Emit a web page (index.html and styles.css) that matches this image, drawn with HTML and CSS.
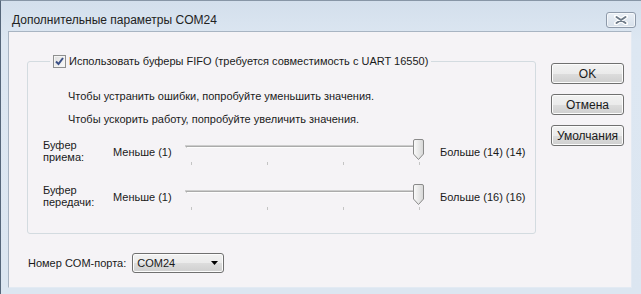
FILE: index.html
```html
<!DOCTYPE html>
<html lang="ru">
<head>
<meta charset="utf-8">
<title>Дополнительные параметры COM24</title>
<link rel="stylesheet" href="styles.css">
</head>
<body>
<div class="window">
  <div class="titlebar">
    <span class="title">Дополнительные параметры COM24</span>
    <span class="close">
      <svg width="14" height="10" viewBox="0 0 14 10">
        <path d="M2 1.5 L12 8.5 M12 1.5 L2 8.5" stroke="#fff" stroke-width="4" stroke-linecap="round"/>
        <path d="M2.5 2 L11.5 8 M11.5 2 L2.5 8" stroke="#6d7a88" stroke-width="2" stroke-linecap="round"/>
      </svg>
    </span>
  </div>
  <div class="client">
    <div class="main">
      <div class="group">
        <div class="legend">
          <span class="checkbox">
            <svg width="11" height="11" viewBox="0 0 11 11">
              <path d="M2 5.5 L4.5 8 L9 2" fill="none" stroke="#3a4f86" stroke-width="2"/>
            </svg>
          </span>
          <span>Использовать буферы FIFO (требуется совместимость с UART 16550)</span>
        </div>
        <p class="hint first">Чтобы устранить ошибки, попробуйте уменьшить значения.</p>
        <p class="hint">Чтобы ускорить работу, попробуйте увеличить значения.</p>
        <div class="rows">
          <div class="lbl"><div>Буфер</div><div>приема:</div></div>
          <div class="minmax">Меньше (1)</div>
          <div class="slider">
            <div class="track"></div>
            <svg class="thumb" width="11" height="21" viewBox="0 0 11 21">
              <defs><linearGradient id="tg" x1="0" y1="0" x2="1" y2="0"><stop offset="0" stop-color="#fbfbfb"/><stop offset="1" stop-color="#d6d6d6"/></linearGradient></defs>
              <path d="M2 0.5 H9 Q10.5 0.5 10.5 2 V15 L5.5 20.5 L0.5 15 V2 Q0.5 0.5 2 0.5 Z" fill="url(#tg)" stroke="#8a8a8a"/>
            </svg>
            <div class="ticks"><i></i><i></i><i></i><i></i></div>
          </div>
          <div class="minmax">Больше (14) (14)</div>

          <div class="lbl"><div>Буфер</div><div>передачи:</div></div>
          <div class="minmax">Меньше (1)</div>
          <div class="slider">
            <div class="track"></div>
            <svg class="thumb" width="11" height="21" viewBox="0 0 11 21">
              <path d="M2 0.5 H9 Q10.5 0.5 10.5 2 V15 L5.5 20.5 L0.5 15 V2 Q0.5 0.5 2 0.5 Z" fill="url(#tg)" stroke="#8a8a8a"/>
            </svg>
            <div class="ticks"><i></i><i></i><i></i><i></i></div>
          </div>
          <div class="minmax">Больше (16) (16)</div>
        </div>
      </div>
      <div class="buttons">
        <button class="btn">OK</button>
        <button class="btn">Отмена</button>
        <button class="btn">Умолчания</button>
      </div>
    </div>
    <div class="port">
      <span>Номер COM-порта:</span>
      <span class="combo">
        <span>COM24</span>
        <svg width="7" height="4" viewBox="0 0 7 4"><path d="M0 0 H7 L3.5 4 Z" fill="#000"/></svg>
      </span>
    </div>
  </div>
</div>
</body>
</html>
```
FILE: styles.css
```css
* { box-sizing: border-box; }
html, body { margin: 0; padding: 0; }
body {
  width: 641px;
  height: 294px;
  overflow: hidden;
  font-family: "Liberation Sans", Arial, sans-serif;
  font-size: 11px;
  color: #1a1a1a;
}
.window {
  width: 641px;
  height: 294px;
  display: flex;
  flex-direction: column;
  background: linear-gradient(#d3dfec, #dde7f2 40px, #dce6f1);
  border-left: 1px solid #55667a;
  border-top: 1px solid #8796a6;
  padding: 0 9px 6px 7px;
}
.titlebar {
  height: 30px;
  flex: none;
  display: flex;
  justify-content: space-between;
  align-items: flex-start;
}
.title {
  margin: 11px 0 0 4px;
  font-size: 12px;
  color: #222;
  line-height: 16px;
}
.close {
  margin: 11px -4px 0 0;
  width: 30px;
  height: 16px;
  border: 1px solid #8e9aaa;
  border-radius: 3px;
  background: linear-gradient(#e9eff6, #d7e0ea);
  display: flex;
  align-items: center;
  justify-content: center;
  box-shadow: inset 0 0 0 1px rgba(255,255,255,0.6);
}
.client {
  flex: 1;
  background: #f5f3f6;
  border: 1px solid #a8b4c2;
  border-right-color: #e3eaf3;
  border-bottom-color: #e3eaf3;
  padding: 29px 7px 0 18px;
  display: flex;
  flex-direction: column;
}
.main {
  display: flex;
  gap: 15px;
}
.group {
  width: 510px;
  height: 173px;
  border: 1px solid #d3dbe0;
  border-radius: 3px;
}
.legend {
  display: flex;
  align-items: center;
  gap: 3px;
  height: 14px;
  margin: -8px 0 0 22px;
  padding: 0 3px;
  width: max-content;
  background: #f5f3f6;
  line-height: 14px;
}
.checkbox {
  width: 13px;
  height: 13px;
  border: 1px solid #8e8f8f;
  background: linear-gradient(135deg, #dedede, #fbfbfb);
  box-shadow: inset 0 0 0 1px #f4f4f4;
  display: flex;
  align-items: center;
  justify-content: center;
}
.hint {
  margin: 9px 0 0 40px;
  line-height: 14px;
}
.hint.first { margin-top: 21px; }
.rows {
  display: grid;
  grid-template-columns: 70px 73px 254px auto;
  row-gap: 17px;
  margin: 13px 0 0 15px;
}
.lbl { line-height: 12px; }
.lbl div { height: 12px; }
.minmax { line-height: 14px; margin-top: 6px; }
.slider {
  position: relative;
  width: 239px;
  height: 28px;
  padding-top: 7px;
}
.track {
  height: 2px;
  width: 234px;
  border-top: 1px solid #ababab;
  border-bottom: 1px solid #fdfdfd;
  border-left: 1px solid #ababab;
  box-shadow: -1px -1px 0 0 #cdcdcd;
}
.thumb {
  position: absolute;
  right: 1px;
  top: 0;
}
.ticks {
  display: flex;
  justify-content: space-between;
  padding: 0 5px;
  margin-top: 14px;
}
.ticks i {
  display: block;
  width: 1px;
  height: 3px;
  background: #c4c4c4;
}
.buttons {
  display: flex;
  flex-direction: column;
  gap: 10px;
  margin-top: 2px;
}
.btn {
  width: 73px;
  height: 21px;
  padding: 0;
  font-family: "Liberation Sans", Arial, sans-serif;
  font-size: 12px;
  color: #1a1a1a;
  border: 1px solid #707070;
  border-radius: 3px;
  background: linear-gradient(#f2f2f2 0%, #ebebeb 50%, #dddddd 51%, #cfcfcf 100%);
  box-shadow: inset 0 0 0 1px #fcfcfc;
}
.port {
  display: flex;
  align-items: center;
  gap: 6px;
  margin: 19px 0 0 1px;
}
.combo {
  width: 92px;
  height: 20px;
  border: 1px solid #707070;
  border-radius: 3px;
  background: linear-gradient(#f2f2f2 0%, #ebebeb 50%, #dddddd 51%, #cfcfcf 100%);
  box-shadow: inset 0 0 0 1px #fcfcfc;
  display: flex;
  align-items: center;
  justify-content: space-between;
  padding: 0 5px 0 4px;
}
```
